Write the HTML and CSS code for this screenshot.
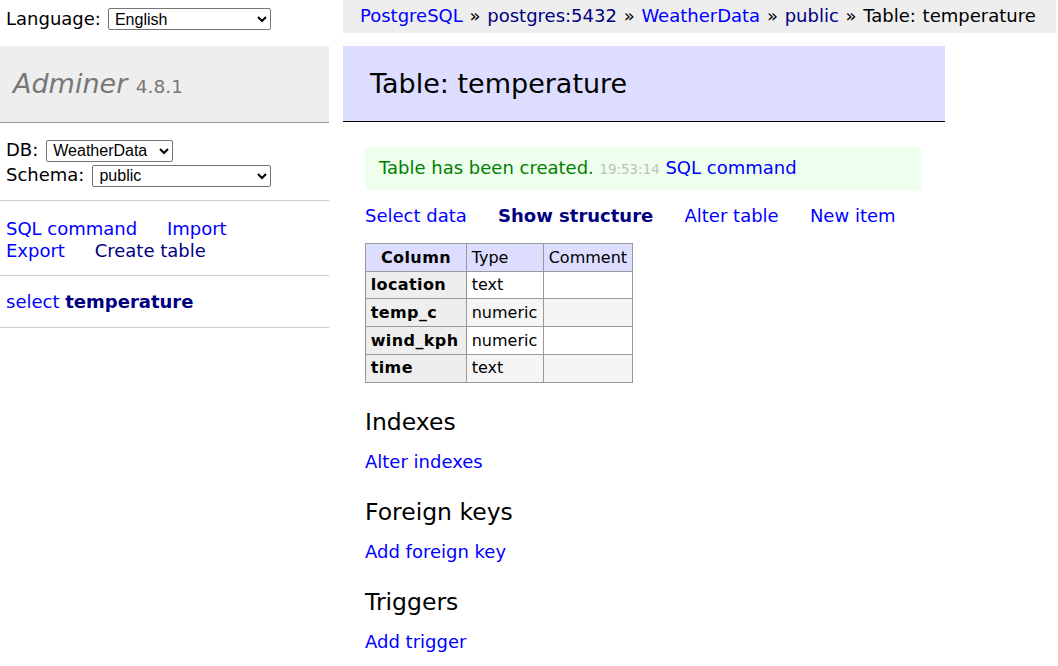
FILE: index.html
```html
<!DOCTYPE html>
<html lang="en">
<head>
<meta charset="utf-8">
<title>Table: temperature - PostgreSQL - Adminer</title>
<link rel="stylesheet" href="styles.css">
</head>
<body>
<div class="page">
  <form class="lang">
    <span>Language:</span>
    <select class="sel sel-lang"><option>English</option></select>
  </form>
  <p class="breadcrumb"><a href="#" class="lnk">PostgreSQL</a> » <a href="#" class="lnk visited">postgres:5432</a> » <a href="#" class="lnk">WeatherData</a> » <a href="#" class="lnk visited">public</a> » Table: temperature</p>

  <div class="menu">
    <h1 class="logo"><a href="#" class="logo-link">Adminer</a> <span class="version">4.8.1</span></h1>
    <form class="menu-sec dbs">
      <div class="dbs-row">DB: <select class="sel sel-db"><option>WeatherData</option></select></div>
      <div class="dbs-row">Schema: <select class="sel sel-ns"><option>public</option></select></div>
    </form>
    <p class="menu-sec menu-links">
      <a href="#" class="lnk">SQL command</a>
      <a href="#" class="lnk">Import</a>
      <a href="#" class="lnk">Export</a>
      <a href="#" class="lnk visited">Create table</a>
    </p>
    <ul class="menu-sec tables">
      <li><a href="#" class="lnk">select</a> <a href="#" class="lnk visited strong">temperature</a></li>
    </ul>
  </div>

  <div class="content">
    <h2 class="title">Table: temperature</h2>
    <div class="message">Table has been created. <span class="time">19:53:14</span> <a href="#" class="lnk">SQL command</a></div>
    <p class="links">
      <a href="#" class="lnk">Select data</a>
      <a href="#" class="lnk visited strong">Show structure</a>
      <a href="#" class="lnk">Alter table</a>
      <a href="#" class="lnk">New item</a>
    </p>
    <table class="struct">
      <colgroup><col class="c1"><col class="c2"><col class="c3"></colgroup>
      <thead>
        <tr><th>Column</th><td>Type</td><td>Comment</td></tr>
      </thead>
      <tbody>
        <tr><th>location</th><td>text</td><td></td></tr>
        <tr class="odd"><th>temp_c</th><td>numeric</td><td></td></tr>
        <tr><th>wind_kph</th><td>numeric</td><td></td></tr>
        <tr class="odd"><th>time</th><td>text</td><td></td></tr>
      </tbody>
    </table>

    <h3 class="sub">Indexes</h3>
    <p class="links"><a href="#" class="lnk">Alter indexes</a></p>
    <h3 class="sub">Foreign keys</h3>
    <p class="links"><a href="#" class="lnk">Add foreign key</a></p>
    <h3 class="sub">Triggers</h3>
    <p class="links"><a href="#" class="lnk">Add trigger</a></p>
  </div>
</div>
</body>
</html>
```

FILE: styles.css
```css
html, body {
  margin: 0;
  padding: 0;
  background: #fff;
}
body {
  color: #000;
  font-family: "DejaVu Sans", Verdana, sans-serif;
  font-size: 18px;
  line-height: 1.25;
}
.page {
  display: grid;
  grid-template-columns: 343px 713px;
  grid-template-rows: auto auto;
  align-items: start;
}
.lnk {
  color: #00f;
  text-decoration: none;
}
.lnk.visited {
  color: #000080;
}
.strong {
  font-weight: bold;
}
.sel {
  font-family: "Liberation Sans", Arial, sans-serif;
  font-size: 16px;
  height: 22px;
  padding: 0 0 0 2px;
  border: 1px solid #767676;
  border-radius: 2px;
  background: #fff;
  color: #000;
  margin: 0;
  vertical-align: middle;
}
.lang {
  margin: 0;
  height: 38px;
  display: flex;
  align-items: center;
  gap: 7px;
  padding: 0 6px;
}
.sel-lang { width: 163px; }
.sel-db { width: 127px; }
.sel-ns { width: 179px; }

.breadcrumb {
  margin: 0;
  height: 33px;
  line-height: 31px;
  padding: 0 17px;
  background: #eee;
  white-space: nowrap;
  word-spacing: 1px;
}

.menu {
  width: 329px;
  margin-top: 8px;
}
.logo {
  margin: 0;
  padding: 22px 13px;
  height: 32px;
  font-size: 27px;
  line-height: 32px;
  font-weight: normal;
  font-style: italic;
  background: #eee;
  border-bottom: 1px solid #999;
  color: #777;
}
.logo-link {
  color: #777;
  text-decoration: none;
}
.version {
  font-style: normal;
  font-size: 18.5px;
  line-height: 1;
  color: #777;
}
.menu-sec {
  margin: 0;
  border-bottom: 1px solid #ccc;
}
.dbs {
  padding: 15px 6px 12px;
}
.dbs-row {
  height: 25px;
  display: flex;
  align-items: center;
  gap: 8px;
}
.menu-links {
  padding: 17px 6px 13px;
  line-height: 22px;
}
.menu-links .lnk {
  margin-right: 24px;
  white-space: nowrap;
}
.tables {
  list-style: none;
  padding: 15px 6px 14px;
  line-height: 22px;
  white-space: nowrap;
}

.content {
  width: 602px;
  box-sizing: border-box;
  padding: 8px 24px 20px 22px;
}
.title {
  margin: 0 -24px 25px -22px;
  padding: 21.5px 26px 21.5px 27px;
  font-size: 27px;
  line-height: 32px;
  font-weight: normal;
  background: #ddf;
  border-bottom: 1px solid #000;
}
.message {
  color: green;
  background: #efe;
  padding: 10px 14px 9px;
  line-height: 22px;
  margin: 0;
}
.time {
  color: silver;
  font-size: 13.4px;
}
.links {
  margin: 15px 0 0;
  line-height: 22px;
  white-space: nowrap;
}
.links .lnk {
  margin-right: 25.5px;
}
.struct {
  margin: 16px 0 0;
  border-collapse: collapse;
  font-size: 16px;
  line-height: 19.7px;
  table-layout: fixed;
  width: 267px;
}
.c1 { width: 101px; }
.c2 { width: 77px; }
.c3 { width: 89px; }
.struct th, .struct td {
  border: 1px solid #999;
  padding: 3.5px 4.7px;
  text-align: left;
  height: 19.7px;
  white-space: nowrap;
  overflow: hidden;
}
.struct th {
  background: #eee;
  font-weight: bold;
  letter-spacing: 0.4px;
}
.struct thead th {
  text-align: center;
  padding: 3.5px 7px;
}
.struct thead th, .struct thead td {
  background: #ddf;
}
.struct tbody td {
  background: #fff;
}
.struct tbody tr.odd td {
  background: #f5f5f5;
}
.sub {
  font-size: 23.5px;
  line-height: 32px;
  font-weight: normal;
  margin: 23px 0 0;
}
.sub + .links {
  margin-top: 13px;
}
```
